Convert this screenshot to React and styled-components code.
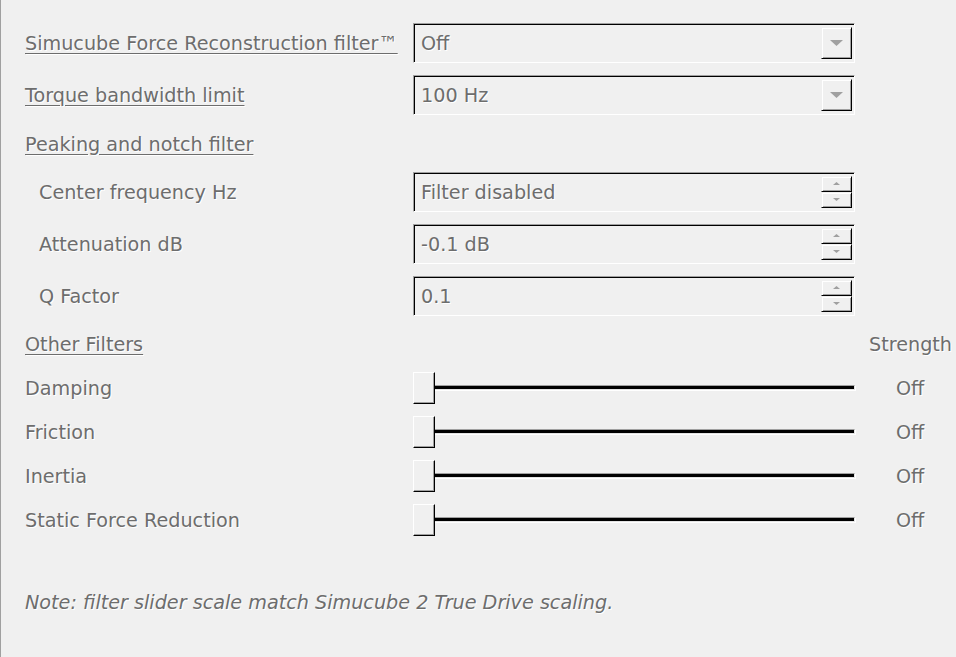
import React from 'react';
import styled, { createGlobalStyle } from 'styled-components';

const GlobalStyle = createGlobalStyle`
  html, body {
    margin: 0;
    padding: 0;
    background: #f0f0f0;
  }
  body {
    font-family: "DejaVu Sans", Tahoma, Verdana, sans-serif;
  }
`;

const Panel = styled.div`
  width: 956px;
  height: 657px;
  box-sizing: border-box;
  background: #f0f0f0;
  border-left: 1px solid #a0a0a0;
  padding: 23px 0 0 24px;
  display: flex;
  flex-direction: column;
  overflow: hidden;
`;

const Text = styled.span`
  font-size: 19.2px;
  line-height: 24px;
  padding-top: 2px;
  color: #6d6d6d;
  text-shadow: 1px 1px 0 #ffffff;
  white-space: nowrap;
  text-decoration: ${p => (p.$link ? 'underline' : 'none')};
  text-decoration-color: #6d6d6d;
  text-underline-offset: 3px;
  padding-left: ${p => (p.$indent ? '14px' : '0')};
  font-style: ${p => (p.$italic ? 'italic' : 'normal')};
`;

const Row = styled.div`
  display: grid;
  grid-template-columns: 388px 442px 101px;
  align-items: center;
  height: ${p => p.$h}px;
  margin-bottom: ${p => p.$mb || 0}px;
`;

const Field = styled.div`
  height: 40px;
  box-sizing: border-box;
  border-top: 1px solid #a0a0a0;
  border-left: 1px solid #a0a0a0;
  border-right: 1px solid #ffffff;
  border-bottom: 1px solid #ffffff;
  box-shadow: inset 1px 1px 0 #000000;
  display: flex;
  align-items: center;
  justify-content: space-between;
  padding: 0 2px 0 7px;
`;

const DropButton = styled.div`
  width: 31px;
  height: 32px;
  box-sizing: border-box;
  border-top: 1px solid #f0f0f0;
  border-left: 1px solid #f0f0f0;
  border-right: 1px solid #000000;
  border-bottom: 1px solid #000000;
  box-shadow: inset 1px 1px 0 #ffffff, inset -1px -1px 0 #a0a0a0;
  display: flex;
  align-items: center;
  justify-content: center;
`;

const SpinStack = styled.div`
  display: flex;
  flex-direction: column;
`;

const SpinButton = styled.div`
  width: 31px;
  height: 16px;
  box-sizing: border-box;
  border-top: 1px solid #f0f0f0;
  border-left: 1px solid #f0f0f0;
  border-right: 1px solid #000000;
  border-bottom: 1px solid #000000;
  box-shadow: inset 1px 1px 0 #ffffff, inset -1px -1px 0 #a0a0a0;
  display: flex;
  align-items: center;
  justify-content: center;
`;

const Slider = styled.div`
  position: relative;
  height: 32px;
  display: flex;
  align-items: center;
`;

const Track = styled.div`
  flex: 1;
  height: 5px;
  margin-top: -1px;
  box-sizing: border-box;
  border-top: 1px solid #a0a0a0;
  border-left: 1px solid #a0a0a0;
  border-bottom: 1px solid #e3e3e3;
  border-right: 1px solid #e3e3e3;
  background: #000000;
  box-shadow: 1px 1px 0 #ffffff;
`;

const Thumb = styled.div`
  position: absolute;
  left: 0;
  top: 0;
  width: 22px;
  height: 32px;
  box-sizing: border-box;
  background: #f0f0f0;
  border-top: 1px solid #ffffff;
  border-left: 1px solid #ffffff;
  border-right: 1px solid #000000;
  border-bottom: 1px solid #000000;
  box-shadow: inset -1px -1px 0 #a0a0a0;
`;

const Value = styled(Text)`
  justify-self: start;
  padding-left: ${p => p.$pad}px;
`;

const Note = styled.div`
  margin-top: 38px;
  height: 32px;
  display: flex;
  align-items: center;
`;

const Arrow = ({ up, size = 6 }) => (
  <svg width={size * 2 + 1} height={size + 1} viewBox={`0 0 ${size * 2 + 1} ${size + 1}`}>
    <polygon
      points={up ? `0,${size} ${size * 2 + 1},${size} ${size + 0.5},0` : `0,0 ${size * 2 + 1},0 ${size + 0.5},${size}`}
      fill="#a0a0a0"
    />
  </svg>
);

const Combo = ({ value }) => (
  <Field>
    <Text>{value}</Text>
    <DropButton>
      <Arrow />
    </DropButton>
  </Field>
);

const Spin = ({ value }) => (
  <Field>
    <Text>{value}</Text>
    <SpinStack>
      <SpinButton>
        <Arrow up size={3} />
      </SpinButton>
      <SpinButton>
        <Arrow size={3} />
      </SpinButton>
    </SpinStack>
  </Field>
);

const sliders = ['Damping', 'Friction', 'Inertia', 'Static Force Reduction'];

export default function App() {
  return (
    <>
      <GlobalStyle />
      <Panel>
        <Row $h={40} $mb={12}>
          <Text $link>Simucube Force Reconstruction filter™</Text>
          <Combo value="Off" />
        </Row>
        <Row $h={40}>
          <Text $link>Torque bandwidth limit</Text>
          <Combo value="100 Hz" />
        </Row>
        <Row $h={57}>
          <Text $link>Peaking and notch filter</Text>
        </Row>
        <Row $h={40} $mb={12}>
          <Text $indent>Center frequency Hz</Text>
          <Spin value="Filter disabled" />
        </Row>
        <Row $h={40} $mb={12}>
          <Text $indent>Attenuation dB</Text>
          <Spin value="-0.1 dB" />
        </Row>
        <Row $h={40}>
          <Text $indent>Q Factor</Text>
          <Spin value="0.1" />
        </Row>
        <Row $h={56}>
          <Text $link>Other Filters</Text>
          <span />
          <Value $pad={14}>Strength</Value>
        </Row>
        {sliders.map(name => (
          <Row key={name} $h={32} $mb={12}>
            <Text>{name}</Text>
            <Slider>
              <Track />
              <Thumb />
            </Slider>
            <Value $pad={41}>Off</Value>
          </Row>
        ))}
        <Note>
          <Text $italic>Note: filter slider scale match Simucube 2 True Drive scaling.</Text>
        </Note>
      </Panel>
    </>
  );
}
